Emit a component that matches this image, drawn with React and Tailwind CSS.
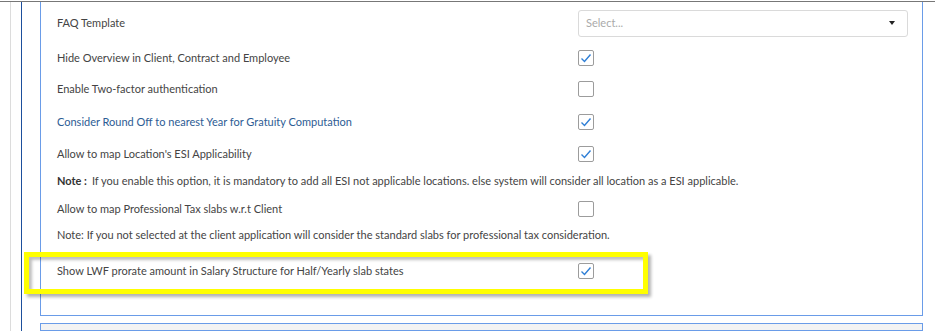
const font = { fontFamily: 'Lato, "Open Sans", sans-serif' };

function Check({ checked }) {
  return (
    <div className="w-[16px] h-[16px] border border-[#9c9c9c] rounded-[2px] bg-white flex items-center justify-center">
      {checked && (
        <svg width="12" height="12" viewBox="0 0 12 12">
          <polyline points="1.5,6.5 4.5,9.5 10.5,2.5" fill="none" stroke="#2f7fd6" strokeWidth="1.4" />
        </svg>
      )}
    </div>
  );
}

function Row({ label, h, checked, blue }) {
  return (
    <div className={`flex items-center ${h}`}>
      <div className={`w-[521px] text-[11px] ${blue ? 'text-[#2d5c94]' : 'text-[#444]'}`}>{label}</div>
      <Check checked={checked} />
    </div>
  );
}

export default function App() {
  return (
    <div className="relative h-[331px] w-[935px] overflow-hidden bg-white" style={font}>
      <div className="h-px" />
      <div className="border-t border-[#777] h-[330px] pl-[10px]">
        <div className="h-full border-l border-[#dcdcdc] pl-[10px]">
          <div className="h-full border-l border-[#1d4f9c] pl-[18px] flex flex-col">
            <div className="w-[883px] border-x border-b border-[#6a9ce8] pl-[16px] pb-[17px]">
              <div className="flex items-center h-[42px]">
                <div className="w-[521px] text-[11px] text-[#444]">FAQ Template</div>
                <div className="w-[330px] h-[27px] border border-[#dadada] rounded-[3px] flex items-center justify-between px-[7px]">
                  <span className="text-[11px] text-[#aaa]">Select...</span>
                  <svg width="6" height="4" viewBox="0 0 6 4" className="mr-[5px]">
                    <polygon points="0,0 6,0 3,4" fill="#222" />
                  </svg>
                </div>
              </div>
              <Row label="Hide Overview in Client, Contract and Employee" h="h-[28px]" checked />
              <Row label="Enable Two-factor authentication" h="h-[34px]" />
              <Row label="Consider Round Off to nearest Year for Gratuity Computation" h="h-[32px]" checked blue />
              <Row label="Allow to map Location's ESI Applicability" h="h-[32px]" checked />
              <div className="h-[22px] flex items-center text-[11px] text-[#444]">
                <span className="font-bold text-[#333] mr-[5px]">Note :</span>
                <span>If you enable this option, it is mandatory to add all ESI not applicable locations. else system will consider all location as a ESI applicable.</span>
              </div>
              <Row label="Allow to map Professional Tax slabs w.r.t Client" h="h-[34px]" />
              <div className="h-[18px] flex items-center text-[11px] text-[#444]">
                Note: If you not selected at the client application will consider the standard slabs for professional tax consideration.
              </div>
              <Row label="Show LWF prorate amount in Salary Structure for Half/Yearly slab states" h="h-[54px]" checked />
            </div>
            <div className="mt-[7px] w-[883px] h-[20px] border border-[#6a9ce8] bg-[#f3f3f3]" />
          </div>
        </div>
      </div>
      <div className="absolute left-[24px] top-[252px] w-[624px] h-[42px] border-[5px] border-[#ffff00] shadow-[3px_3px_3px_rgba(0,0,0,0.3),inset_3px_3px_3px_rgba(0,0,0,0.25)]" />
    </div>
  );
}
